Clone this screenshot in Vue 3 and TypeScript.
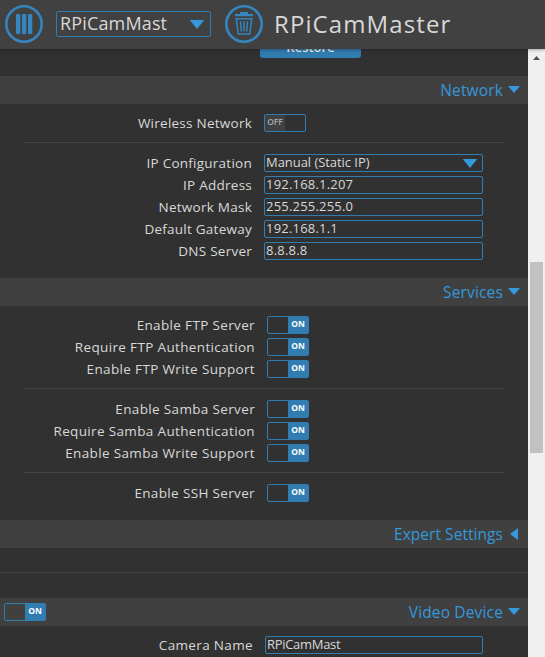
<script setup lang="ts">
import { ref } from 'vue'

interface Row {
  label: string
  kind: 'toggle' | 'text' | 'select'
  on?: boolean
  value?: string
}

interface Section {
  id: string
  title: string
  open: boolean
  toggle?: boolean
  groups: Row[][]
}

const device = ref('RPiCamMast')

const sections = ref<Section[]>([
  {
    id: 'network',
    title: 'Network',
    open: true,
    groups: [
      [{ label: 'Wireless Network', kind: 'toggle', on: false }],
      [
        { label: 'IP Configuration', kind: 'select', value: 'Manual (Static IP)' },
        { label: 'IP Address', kind: 'text', value: '192.168.1.207' },
        { label: 'Network Mask', kind: 'text', value: '255.255.255.0' },
        { label: 'Default Gateway', kind: 'text', value: '192.168.1.1' },
        { label: 'DNS Server', kind: 'text', value: '8.8.8.8' },
      ],
    ],
  },
  {
    id: 'services',
    title: 'Services',
    open: true,
    groups: [
      [
        { label: 'Enable FTP Server', kind: 'toggle', on: true },
        { label: 'Require FTP Authentication', kind: 'toggle', on: true },
        { label: 'Enable FTP Write Support', kind: 'toggle', on: true },
      ],
      [
        { label: 'Enable Samba Server', kind: 'toggle', on: true },
        { label: 'Require Samba Authentication', kind: 'toggle', on: true },
        { label: 'Enable Samba Write Support', kind: 'toggle', on: true },
      ],
      [{ label: 'Enable SSH Server', kind: 'toggle', on: true }],
    ],
  },
  { id: 'expert', title: 'Expert Settings', open: false, groups: [] },
  {
    id: 'video',
    title: 'Video Device',
    open: true,
    toggle: true,
    groups: [[{ label: 'Camera Name', kind: 'text', value: 'RPiCamMast' }]],
  },
])
</script>

<template>
  <div class="app">
    <header class="topbar">
      <svg class="round" viewBox="0 0 38 38">
        <circle cx="19" cy="19" r="17.7" />
        <rect class="fill" x="11" y="9" width="4.300" height="20" rx=".8" />
        <rect class="fill" x="17" y="9" width="4.300" height="20" rx=".8" />
        <rect class="fill" x="23" y="9" width="4.300" height="20" rx=".8" />
      </svg>
      <div class="device">
        <span>{{ device }}</span>
        <svg class="tri" viewBox="0 0 16 10"><path d="M0 0h16L8 10z" /></svg>
      </div>
      <svg class="round" viewBox="0 0 38 38">
        <circle cx="19" cy="19" r="17.7" />
        <path class="fill" d="M10 9h5V7h8v2h5v2.300H10z" />
        <path class="can" d="M11.300 13.800h15.400l-2 15.200H13.300z" />
        <path class="ribs" d="M15.500 16.300l.8 10.200M19 16.300v10.200M22.500 16.300l-.8 10.200" />
      </svg>
      <h1>RPiCamMaster</h1>
    </header>

    <div class="body">
      <main>
        <div class="restore-row"><button class="restore">Restore</button></div>
        <section v-for="s in sections" :key="s.id" :class="s.id">
          <div class="bar" @click="s.open = !s.open">
            <span v-if="s.toggle" class="switch on"><b>ON</b></span>
            <h2>{{ s.title }}</h2>
            <svg v-if="s.open" class="arrow" viewBox="0 0 12 12"><path d="M0 2h12L6 9z" /></svg>
            <svg v-else class="arrow" viewBox="0 0 12 12"><path d="M10 0v12L2 6z" /></svg>
          </div>
          <div v-if="s.open" class="content">
            <div v-for="(g, i) in s.groups" :key="i" class="group">
              <div v-for="r in g" :key="r.label" class="row">
                <label>{{ r.label }}</label>
                <span v-if="r.kind === 'toggle'" class="switch" :class="{ on: r.on }" @click="r.on = !r.on">
                  <b>{{ r.on ? 'ON' : 'OFF' }}</b>
                </span>
                <div v-else class="field">
                  <span>{{ r.value }}</span>
                  <svg v-if="r.kind === 'select'" class="tri" viewBox="0 0 16 10"><path d="M0 0h16L8 10z" /></svg>
                </div>
              </div>
            </div>
          </div>
        </section>
      </main>
      <aside class="scroll">
        <svg viewBox="0 0 17 17"><path d="M5 11l3.500-4 3.500 4z" /></svg>
        <div class="thumb"></div>
      </aside>
    </div>
  </div>
</template>

<style>
body {
  overflow: hidden;
  background: #313131;
}
</style>

<style scoped>
.app {
  width: 545px;
  height: 657px;
  overflow: hidden;
  display: flex;
  flex-direction: column;
  background: #313131;
  color: #d8d8d8;
  font-family: 'Open Sans', 'Noto Sans', sans-serif;
}
.topbar {
  box-sizing: border-box;
  flex: none;
  height: 49px;
  padding: 5px 0 0 5px;
  display: flex;
  align-items: flex-start;
  background: #414141;
  box-shadow: 0 0 4px rgba(0, 0, 0, 0.5);
  z-index: 1;
}
.round {
  width: 38px;
  height: 38px;
  fill: none;
  stroke: #3585bf;
}
.round circle {
  stroke-width: 2.6;
}
.round .fill {
  fill: #3585bf;
  stroke: none;
}
.can {
  stroke-width: 1.5;
}
.ribs {
  stroke-width: 1.5;
}
.device {
  box-sizing: border-box;
  width: 155px;
  height: 26px;
  margin: 6px 14px 0 13px;
  padding: 0 5px 0 3px;
  border: 1px solid #317cb0;
  border-radius: 2px;
  display: flex;
  align-items: center;
  justify-content: space-between;
  font-size: 18px;
  line-height: 22px;
  letter-spacing: 0.15px;
}
.device span {
  height: 24px;
}
.tri {
  flex: none;
  width: 16px;
  height: 9px;
  fill: #3498db;
}
h1 {
  margin: 0 0 0 11px;
  font-size: 24px;
  line-height: 38px;
  font-weight: 400;
  letter-spacing: 1.1px;
}
.body {
  flex: 1;
  min-height: 0;
  display: flex;
}
main {
  width: 528px;
  overflow: hidden;
}
.restore-row {
  height: 27px;
  display: flex;
  align-items: flex-start;
  padding-left: 260px;
}
.restore {
  width: 101px;
  height: 23px;
  margin: -14px 0 0;
  padding: 0;
  border: 0;
  border-radius: 3px;
  background: #317cb0;
  color: #eee;
  font: 600 13px/20px 'Open Sans', sans-serif;
}
.bar {
  height: 28px;
  box-sizing: border-box;
  padding: 0 8px 0 4px;
  display: flex;
  align-items: center;
  justify-content: flex-end;
  background: #404040;
}
.bar .switch {
  margin-right: auto;
}
h2 {
  margin: 0 5px 0 0;
  color: #3498db;
  font-size: 15.5px;
  line-height: 26px;
  font-weight: 400;
  letter-spacing: 0.15px;
}
.expert h2 {
  letter-spacing: 0.05px;
}
.arrow {
  width: 12px;
  height: 12px;
  fill: #3498db;
}
.content {
  padding: 10px 24px 18px 23px;
}
.group {
  display: flex;
  flex-direction: column;
  gap: 4px;
}
.group + .group {
  margin-top: 10px;
  padding-top: 11px;
  border-top: 1px solid #444;
}
.row {
  height: 18px;
  display: flex;
  align-items: center;
}
label {
  box-sizing: border-box;
  width: 241px;
  padding-right: 12px;
  flex: none;
  text-align: right;
  white-space: nowrap;
  font-size: 13.5px;
  line-height: 18px;
  letter-spacing: 0.25px;
}
.services label {
  width: 244px;
  letter-spacing: 0.35px;
}
.video label {
  width: 242px;
  letter-spacing: 0.35px;
}
.field {
  box-sizing: border-box;
  width: 219px;
  height: 18px;
  border: 1px solid #317cb0;
  border-radius: 2px;
  padding: 0 4px 0 1px;
  display: flex;
  align-items: center;
  justify-content: space-between;
  font-size: 13px;
  line-height: 14px;
}
.field span {
  height: 16px;
  letter-spacing: -0.05px;
}
.network .row:nth-child(n + 2) .field span {
  letter-spacing: 0.2px;
}
.video .field {
  width: 218px;
}
.video .field span {
  letter-spacing: -0.3px;
}
.switch {
  box-sizing: border-box;
  width: 42px;
  height: 18px;
  border: 1px solid #317cb0;
  border-radius: 2px;
  display: flex;
  flex: none;
}
.switch b {
  width: 20px;
  height: 16px;
  font-size: 8.5px;
  line-height: 14px;
  text-align: center;
  font-weight: 600;
  color: #aaa;
  background: #414141;
}
.switch.on {
  justify-content: flex-end;
}
.switch.on b {
  font-weight: 700;
  color: #fff;
  background: #317cb0;
}
.expert {
  box-sizing: border-box;
  height: 25px;
  height: 53px;
  margin-bottom: 25px;
  border-bottom: 1px solid #444;
}
.scroll {
  width: 17px;
  background: #f0f0f0;
}
.scroll svg {
  display: block;
  width: 17px;
  height: 17px;
  fill: #505050;
}
.thumb {
  width: 13px;
  height: 191px;
  margin: 196px 2px 0;
  background: #c1c1c1;
}
</style>
